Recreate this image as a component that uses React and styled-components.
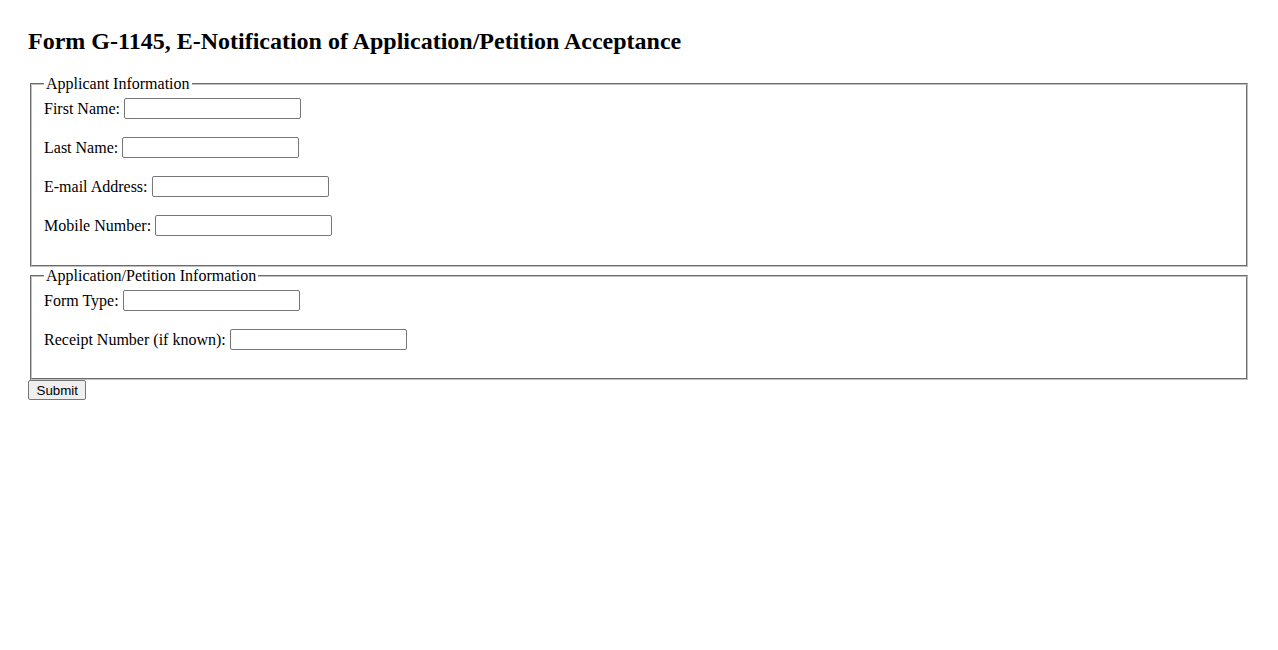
import React from "react"
import styled, { createGlobalStyle } from "styled-components"

const GlobalStyle = createGlobalStyle`
  body {
    margin: 8px;
    font-family: "Liberation Serif", "Times New Roman", serif;
    font-size: 16px;
    color: #000;
    background: #fff;
  }
`

const fields = {
  applicant: [
    { id: "firstName", label: "First Name:" },
    { id: "lastName", label: "Last Name:" },
    { id: "email", label: "E-mail Address:" },
    { id: "mobile", label: "Mobile Number:" },
  ],
  petition: [
    { id: "formType", label: "Form Type:" },
    { id: "receipt", label: "Receipt Number (if known):" },
  ],
}

const App = () => {
  return (
    <Page>
      <GlobalStyle />
      <Title>Form G-1145, E-Notification of Application/Petition Acceptance</Title>
      <form onSubmit={(e) => e.preventDefault()}>
        <Fieldset>
          <Legend>Applicant Information</Legend>
          {fields.applicant.map((field) => (
            <Row key={field.id}>
              <label htmlFor={field.id}>{field.label}</label>
              <TextInput id={field.id} type="text" />
            </Row>
          ))}
        </Fieldset>
        <Fieldset $compact>
          <Legend>Application/Petition Information</Legend>
          {fields.petition.map((field) => (
            <Row key={field.id}>
              <label htmlFor={field.id}>{field.label}</label>
              <TextInput id={field.id} type="text" />
            </Row>
          ))}
        </Fieldset>
        <SubmitButton type="submit">Submit</SubmitButton>
      </form>
    </Page>
  )
}

export default App

const Page = styled.div`
  padding: 19px 20px 20px;
`

const Title = styled.h2`
  font-size: 24px;
  font-weight: bold;
  margin: 0 0 20px;
  line-height: 28px;
`

const Fieldset = styled.fieldset`
  margin: 0 2px;
  padding: ${(p) => (p.$compact ? "4px 12px 11px" : "4px 12px 12px")};
  border: 2px groove rgb(192, 192, 192);
`

const Legend = styled.legend`
  padding: 0 2px;
  line-height: 18px;
`

const Row = styled.div`
  display: flex;
  align-items: center;
  gap: 4px;
  height: 23px;
  margin-bottom: 16px;
`

const TextInput = styled.input`
  box-sizing: border-box;
  width: 177px;
  height: 21px;
  padding: 1px 2px;
  border: 1px solid #767676;
  border-radius: 2px;
  font-family: "Liberation Sans", Arial, sans-serif;
  font-size: 13.333px;
`

const SubmitButton = styled.button`
  box-sizing: border-box;
  height: 20px;
  padding: 0 7.5px;
  border: 1px solid #767676;
  border-radius: 2px;
  background: #efefef;
  font-family: "Liberation Sans", Arial, sans-serif;
  font-size: 13.333px;
  color: #000;
`
